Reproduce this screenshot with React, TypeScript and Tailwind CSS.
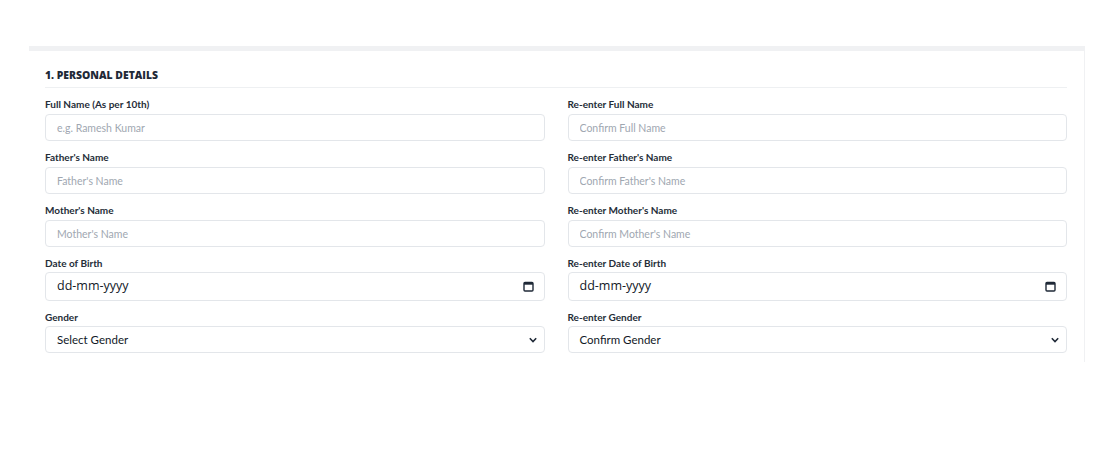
import React from "react";

const rows = [
  { l: "Full Name (As per 10th)", p: "e.g. Ramesh Kumar", rl: "Re-enter Full Name", rp: "Confirm Full Name", t: "text" },
  { l: "Father's Name", p: "Father's Name", rl: "Re-enter Father's Name", rp: "Confirm Father's Name", t: "text" },
  { l: "Mother's Name", p: "Mother's Name", rl: "Re-enter Mother's Name", rp: "Confirm Mother's Name", t: "text" },
  { l: "Date of Birth", p: "dd-mm-yyyy", rl: "Re-enter Date of Birth", rp: "dd-mm-yyyy", t: "date" },
  { l: "Gender", p: "Select Gender", rl: "Re-enter Gender", rp: "Confirm Gender", t: "select" },
];

function Calendar() {
  return (
    <svg width="11" height="11" viewBox="0 0 11 11" className="shrink-0">
      <rect x="1" y="1.5" width="9" height="8.5" rx="1" fill="none" stroke="#1f2937" strokeWidth="1.4" />
      <rect x="1" y="1.5" width="9" height="2.2" fill="#1f2937" />
    </svg>
  );
}

function Chevron() {
  return (
    <svg width="10" height="10" viewBox="0 0 10 10" className="shrink-0">
      <path d="M1.8 3.3 L5 6.5 L8.2 3.3" fill="none" stroke="#1f2937" strokeWidth="1.6" />
    </svg>
  );
}

function Field({ label, ph, type }: { label: string; ph: string; type: string }) {
  return (
    <div className="flex flex-col">
      <label className="text-[10px] font-bold text-[#252d38] leading-[12px] mb-[4px]">{label}</label>
      {type === "text" && (
        <input
          placeholder={ph}
          className="h-[27px] w-full rounded-[4px] border border-[#e3e6ea] bg-white px-[11px] text-[10.5px] text-[#1f2937] outline-none placeholder:text-[#a0a7b1]"
        />
      )}
      {type === "date" && (
        <div className="-mt-[1px] flex h-[29px] w-full items-center justify-between rounded-[4px] border border-[#e3e6ea] bg-white pl-[11px] pr-[10px]">
          <span className="text-[12.5px] text-[#111827] font-['Open_Sans',sans-serif]">{ph}</span>
          <Calendar />
        </div>
      )}
      {type === "select" && (
        <div className="-mt-[1px] flex h-[27px] w-full items-center justify-between rounded-[4px] border border-[#e3e6ea] bg-white pl-[11px] pr-[6px]">
          <span className="text-[11.5px] text-[#111827]">{ph}</span>
          <Chevron />
        </div>
      )}
    </div>
  );
}

export default function App() {
  return (
    <div className="min-h-[460px] w-[1117px] bg-white font-['Lato',sans-serif] pt-[46px] pl-[29px] pr-[32px]">
      <div className="border-t-[5px] border-r border-[#f0f1f3] bg-white pl-[16px] pr-[17px] pt-[16px] pb-[9px]">
        <h2 className="font-['Open_Sans',sans-serif] text-[10.4px] font-extrabold text-[#1f2937] leading-[16px] pb-[4px] border-b border-[#eef0f2]">
          1. PERSONAL DETAILS
        </h2>
        <div className="mt-[10px] grid grid-cols-2 gap-x-[23px] gap-y-[10px]">
          {rows.map((r) => (
            <React.Fragment key={r.l}>
              <Field label={r.l} ph={r.p} type={r.t} />
              <Field label={r.rl} ph={r.rp} type={r.t} />
            </React.Fragment>
          ))}
        </div>
      </div>
    </div>
  );
}
